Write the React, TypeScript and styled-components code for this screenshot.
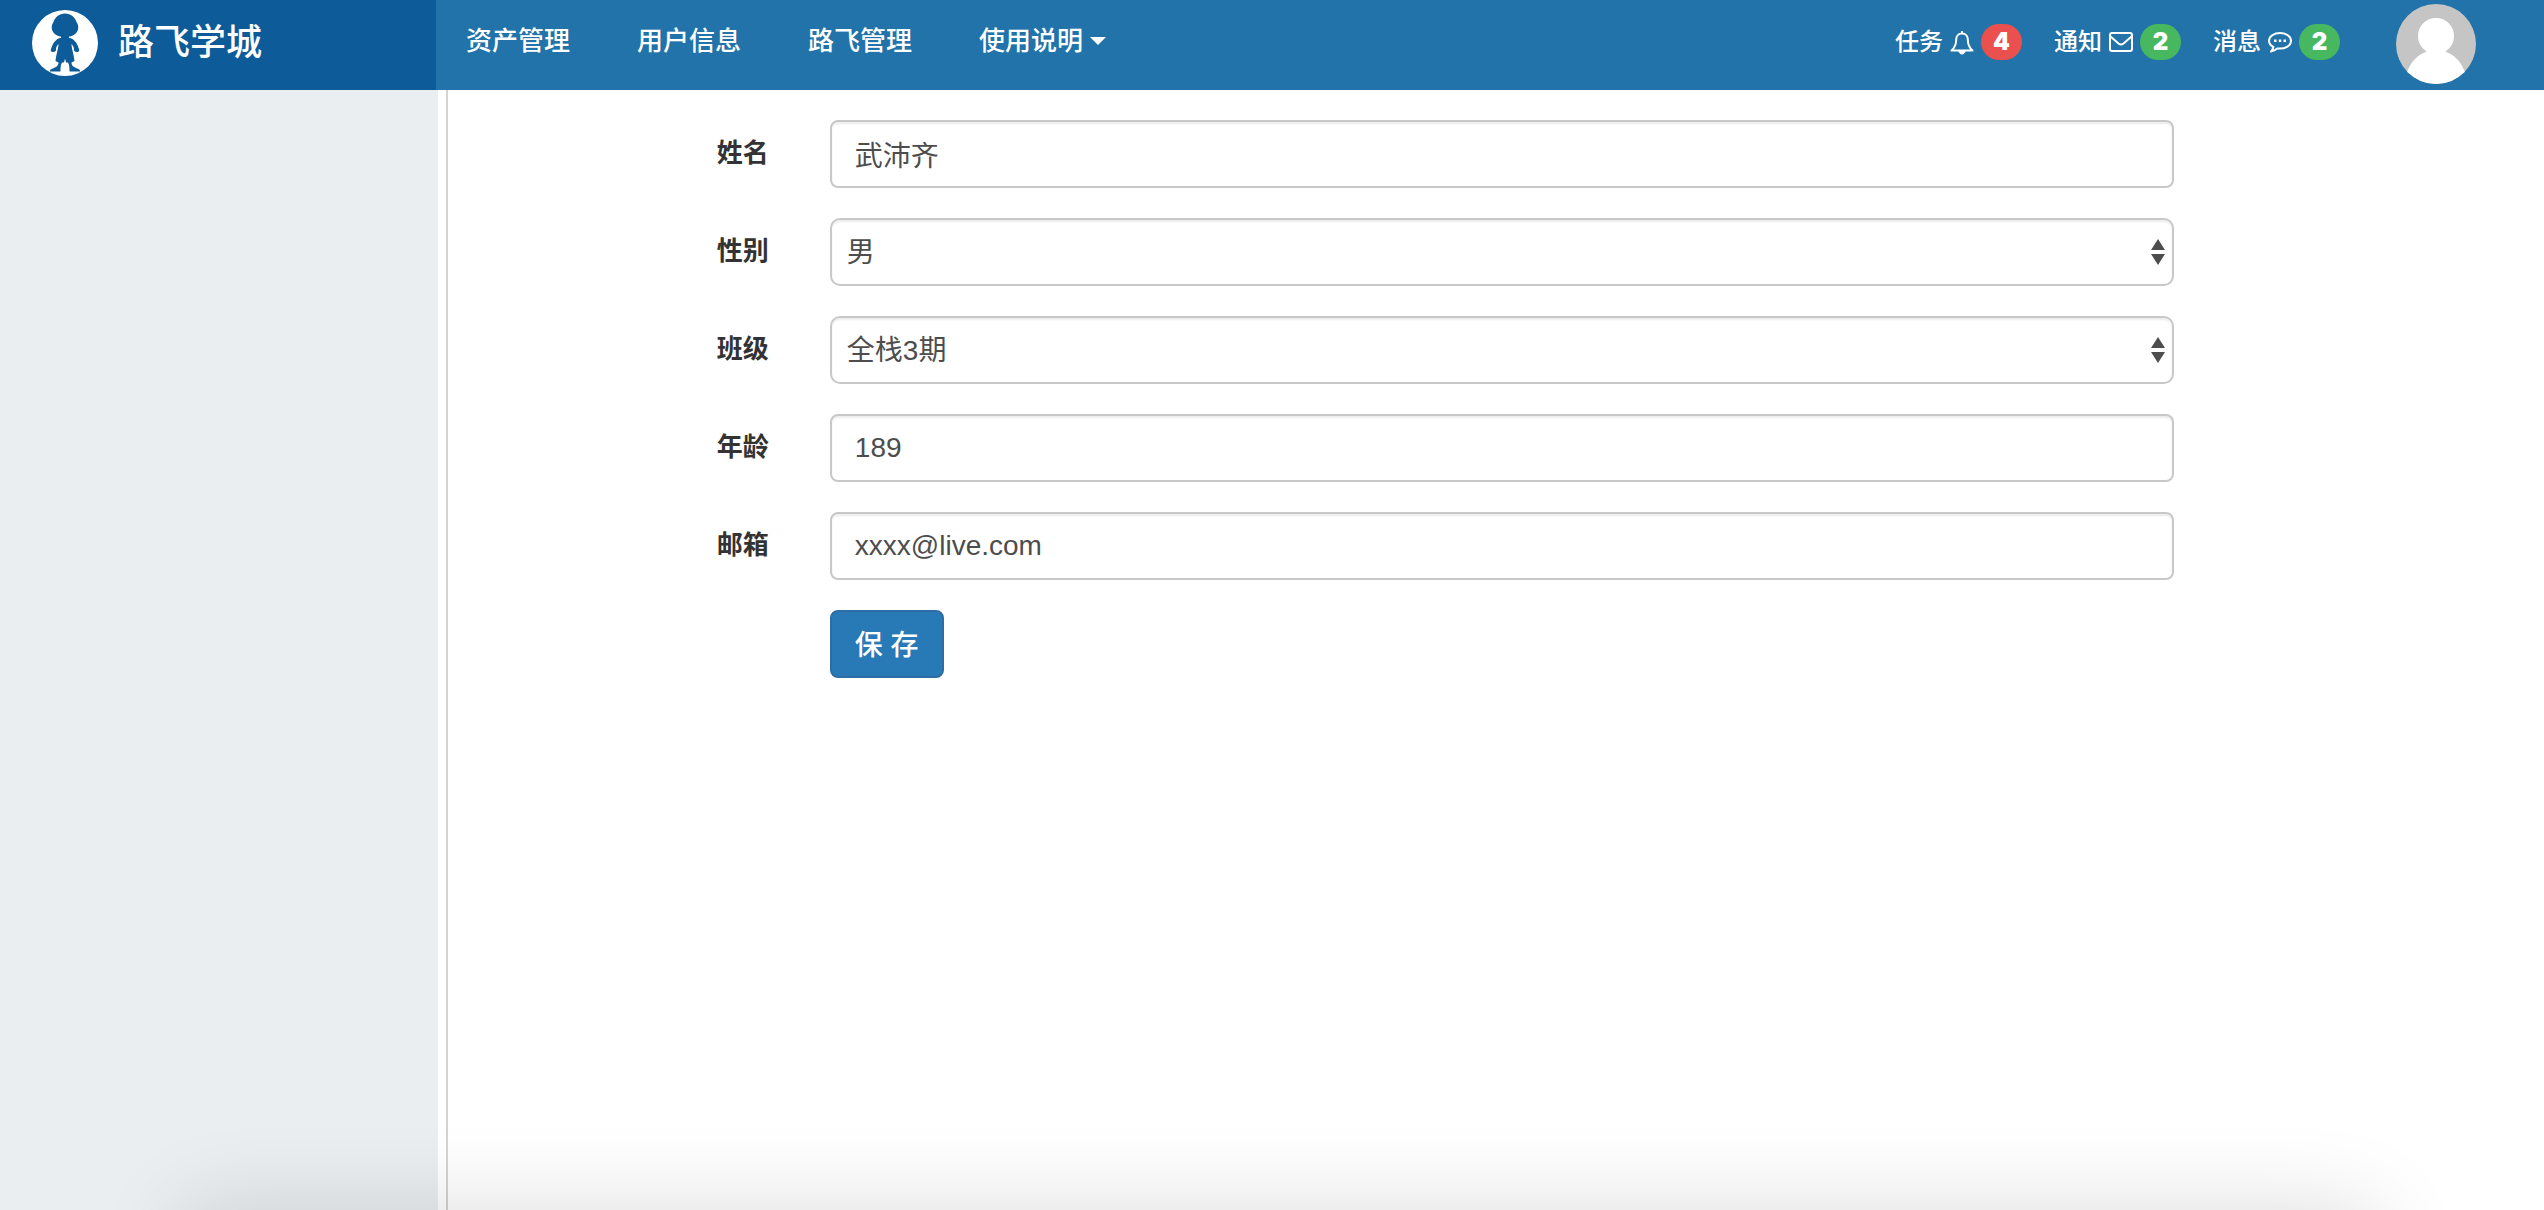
import React from "react";
import styled, { createGlobalStyle } from "styled-components";

const GlobalStyle = createGlobalStyle`
  *, *::before, *::after { box-sizing: border-box; }
  body {
    margin: 0;
    background: #fff;
    color: #333;
    font-family: "Liberation Sans", "Noto Sans CJK SC", sans-serif;
    font-size: 28px;
  }
`;

const Page = styled.div`
  min-height: 100vh;
  display: flex;
  flex-direction: column;
`;

const Header = styled.header`
  display: flex;
  height: 90px;
  background: #2173a9;
  color: #fff;
`;

const Brand = styled.a`
  width: 436px;
  flex: none;
  display: flex;
  align-items: center;
  gap: 20px;
  padding: 0 32px 4px;
  background: #0d5b99;
  color: #fff;
  font-size: 36px;
  font-weight: 500;
  line-height: 44px;
  text-decoration: none;
`;

const Logo = styled.svg`
  width: 66px;
  height: 66px;
`;

const Nav = styled.nav`
  display: flex;
  align-items: center;
  gap: 67px;
  padding: 0 30px 8px;
`;

const NavLink = styled.a`
  display: flex;
  align-items: center;
  gap: 7px;
  color: #fff;
  font-size: 26px;
  font-weight: 500;
  line-height: 40px;
  text-decoration: none;
  white-space: nowrap;
`;

const Caret = styled.span`
  border: 8px solid transparent;
  border-top-color: #fff;
  border-bottom: 0;
`;

const Notices = styled.div`
  display: flex;
  align-items: center;
  gap: 32px;
  margin-left: auto;
  padding-bottom: 6px;
`;

const Notice = styled.a`
  display: flex;
  align-items: center;
  gap: 7px;
  color: #fff;
  font-size: 24px;
  font-weight: 500;
  line-height: 36px;
  text-decoration: none;
  white-space: nowrap;
`;

const NoticeIcon = styled.svg`
  width: 24px;
  height: 28px;
  fill: none;
  stroke: #fff;
  stroke-width: 2;
  stroke-linejoin: round;
`;

const Badge = styled.span<{ $color: string }>`
  width: 41px;
  height: 36px;
  border-radius: 18px;
  background: ${(p) => p.$color};
  font-family: Inter, "Liberation Sans", sans-serif;
  font-size: 24px;
  font-weight: 900;
  line-height: 36px;
  text-align: center;
`;

const Avatar = styled.svg`
  width: 80px;
  height: 80px;
  margin: 4px 68px 0 56px;
  flex: none;
`;

const Body = styled.div`
  flex: 1;
  display: flex;
`;

const Sidebar = styled.aside`
  width: 438px;
  flex: none;
  background: #eaeef1;
`;

const Main = styled.main`
  flex: 1;
  margin-left: 8px;
  padding: 30px 340px 30px 71px;
  border-left: 2px solid #d3d3d3;
`;

const Form = styled.form`
  display: flex;
  flex-direction: column;
  gap: 30px;
`;

const Row = styled.div`
  display: grid;
  grid-template-columns: 1fr 5fr;
`;

const Label = styled.label`
  padding: 14px 31px 0;
  font-size: 26px;
  font-weight: 700;
  line-height: 38px;
  text-align: right;
`;

const Cell = styled.div`
  grid-column: 2;
  padding: 0 30px;
`;

const control = `
  display: block;
  width: 100%;
  height: 68px;
  border: 2px solid #c8c8c8;
  background: #fff;
  box-shadow: inset 0 2px 2px rgba(0, 0, 0, 0.075);
  color: #4d4d4d;
  font-family: inherit;
  font-size: 28px;
`;

const Input = styled.input`
  ${control}
  border-radius: 8px;
  padding: 0 23px;
`;

const SelectBox = styled.div`
  position: relative;
`;

const Select = styled.select`
  ${control}
  appearance: none;
  border-radius: 10px;
  padding: 0 40px 0 15px;
`;

const Arrows = styled.svg`
  position: absolute;
  top: 21px;
  right: 9px;
  width: 14px;
  height: 26px;
  fill: #4d4d4d;
  pointer-events: none;
`;

const Save = styled.button`
  height: 68px;
  padding: 0 23px 2px;
  border: 2px solid #2e6da4;
  border-radius: 8px;
  background: #277ab5;
  color: #fff;
  font-family: inherit;
  font-size: 28px;
  font-weight: 500;
`;

const DockShadow = styled.div`
  position: fixed;
  top: 100%;
  left: 185px;
  right: 170px;
  height: 200px;
  box-shadow: 0 0 90px rgba(0, 0, 0, 0.14);
  pointer-events: none;
`;

const BellIcon = () => (
  <NoticeIcon viewBox="0 0 24 28" aria-hidden>
    <path d="M12 3v3M12 5.500c-3.800 0-5.800 2.800-5.800 6 0 5-1.700 8.500-4.700 11h21c-3-2.500-4.700-6-4.700-11 0-3.200-2-6-5.800-6z" />
    <path d="M9 23c0 4 6 4 6 0z" fill="#fff" strokeWidth="1" />
  </NoticeIcon>
);

const MailIcon = () => (
  <NoticeIcon viewBox="0 0 24 28" aria-hidden>
    <rect x="1" y="5" width="22" height="18" rx="2" />
    <path d="M1.500 8.500l8 7q2.500 2 5 0l8-7" />
  </NoticeIcon>
);

const ChatIcon = () => (
  <NoticeIcon viewBox="0 0 24 28" aria-hidden>
    <path d="M12 5C6 5 1 8.400 1 12.700c0 2.600 1.700 4.900 4.400 6.300-.4 2-1.200 3.200-2.400 4.500 2.600-.4 4.700-1.400 6.300-3.100C17 21.500 23 17.700 23 12.700 23 8.400 18 5 12 5z" />
    <path d="M6 12.700h2.500M10.750 12.700h2.500M15.500 12.700h2.500" strokeWidth="2.500" />
  </NoticeIcon>
);

const notices = [
  { text: "任务", Icon: BellIcon, count: 4, color: "#e9504e" },
  { text: "通知", Icon: MailIcon, count: 2, color: "#47b85f" },
  { text: "消息", Icon: ChatIcon, count: 2, color: "#47b85f" },
];

type FieldProps = { id: string; label: string; value: string; options?: string[] };

const fields: FieldProps[] = [
  { id: "name", label: "姓名", value: "武沛齐" },
  { id: "gender", label: "性别", value: "男", options: ["男", "女"] },
  { id: "class", label: "班级", value: "全栈3期", options: ["全栈3期"] },
  { id: "age", label: "年龄", value: "189" },
  { id: "email", label: "邮箱", value: "xxxx@live.com" },
];

const Field = ({ id, label, value, options }: FieldProps) => (
  <Row>
    <Label htmlFor={id}>{label}</Label>
    <Cell>
      {options ? (
        <SelectBox>
          <Select id={id} defaultValue={value}>
            {options.map((o) => (
              <option key={o}>{o}</option>
            ))}
          </Select>
          <Arrows viewBox="0 0 14 26" aria-hidden>
            <path d="M7 0l7 11H0zM7 26l7-11H0z" />
          </Arrows>
        </SelectBox>
      ) : (
        <Input id={id} defaultValue={value} />
      )}
    </Cell>
  </Row>
);

export default function App() {
  return (
    <Page>
      <GlobalStyle />
      <Header>
        <Brand href="#">
          <Logo viewBox="0 0 66 66" aria-hidden>
            <circle cx="33" cy="33" r="33" fill="#fff" />
            <g fill="#0d5b99">
              <path d="M33 3.500c6 0 10 4 11.500 8.500 1.300 2 2 4 1.700 6.500-.5 5-6 8.500-13.200 8.500s-12.700-3.500-13.200-8.500c-.3-2.500.4-4.500 1.700-6.500C23 7.500 27 3.500 33 3.500z" />
              <path d="M29 26h8v2h1c4 1 7.500 5.500 8.500 10 1.500 2 .5 4-1.500 4-2.500 0-3.500-1.500-3-3.500-.5-2-1.500-3.500-2.500-4.500 0 4 2.500 11 3 17l-3 1.500c0 3 1.500 4.500 7 6.500q2 .8 1.500 2.500H37.500c0-4 0-6-1.500-9h-2l-1-4-1 4h-2c-1.500 3-1.500 5-1.500 9H18q-.5-1.700 1.500-2.500c5.500-2 7-3.500 7-6.500l-3-1.500c.5-6 3-13 3-17-1 1-2 2.500-2.500 4.500.5 2-.5 3.500-3 3.500-2 0-3-2-1.500-4 1-4.500 4.500-9 8.500-10h1z" />
            </g>
          </Logo>
          路飞学城
        </Brand>
        <Nav>
          <NavLink href="#">资产管理</NavLink>
          <NavLink href="#">用户信息</NavLink>
          <NavLink href="#">路飞管理</NavLink>
          <NavLink href="#">
            使用说明
            <Caret />
          </NavLink>
        </Nav>
        <Notices>
          {notices.map(({ text, Icon, count, color }) => (
            <Notice href="#" key={text}>
              {text}
              <Icon />
              <Badge $color={color}>{count}</Badge>
            </Notice>
          ))}
        </Notices>
        <Avatar viewBox="0 0 80 80" role="img" aria-label="avatar">
          <clipPath id="avatar-clip">
            <circle cx="40" cy="40" r="40" />
          </clipPath>
          <g clipPath="url(#avatar-clip)">
            <rect width="80" height="80" fill="#c5c5c5" />
            <ellipse cx="40" cy="32" rx="18" ry="18" fill="#fff" />
            <path d="M30 44h20v4c9 3 15 10 19 20v12H11V68c4-10 10-17 19-20z" fill="#fff" />
          </g>
        </Avatar>
      </Header>
      <Body>
        <Sidebar />
        <Main>
          <Form onSubmit={(e) => e.preventDefault()}>
            {fields.map((f) => (
              <Field key={f.id} {...f} />
            ))}
            <Row>
              <Cell>
                <Save type="submit">保 存</Save>
              </Cell>
            </Row>
          </Form>
        </Main>
      </Body>
      <DockShadow />
    </Page>
  );
}
